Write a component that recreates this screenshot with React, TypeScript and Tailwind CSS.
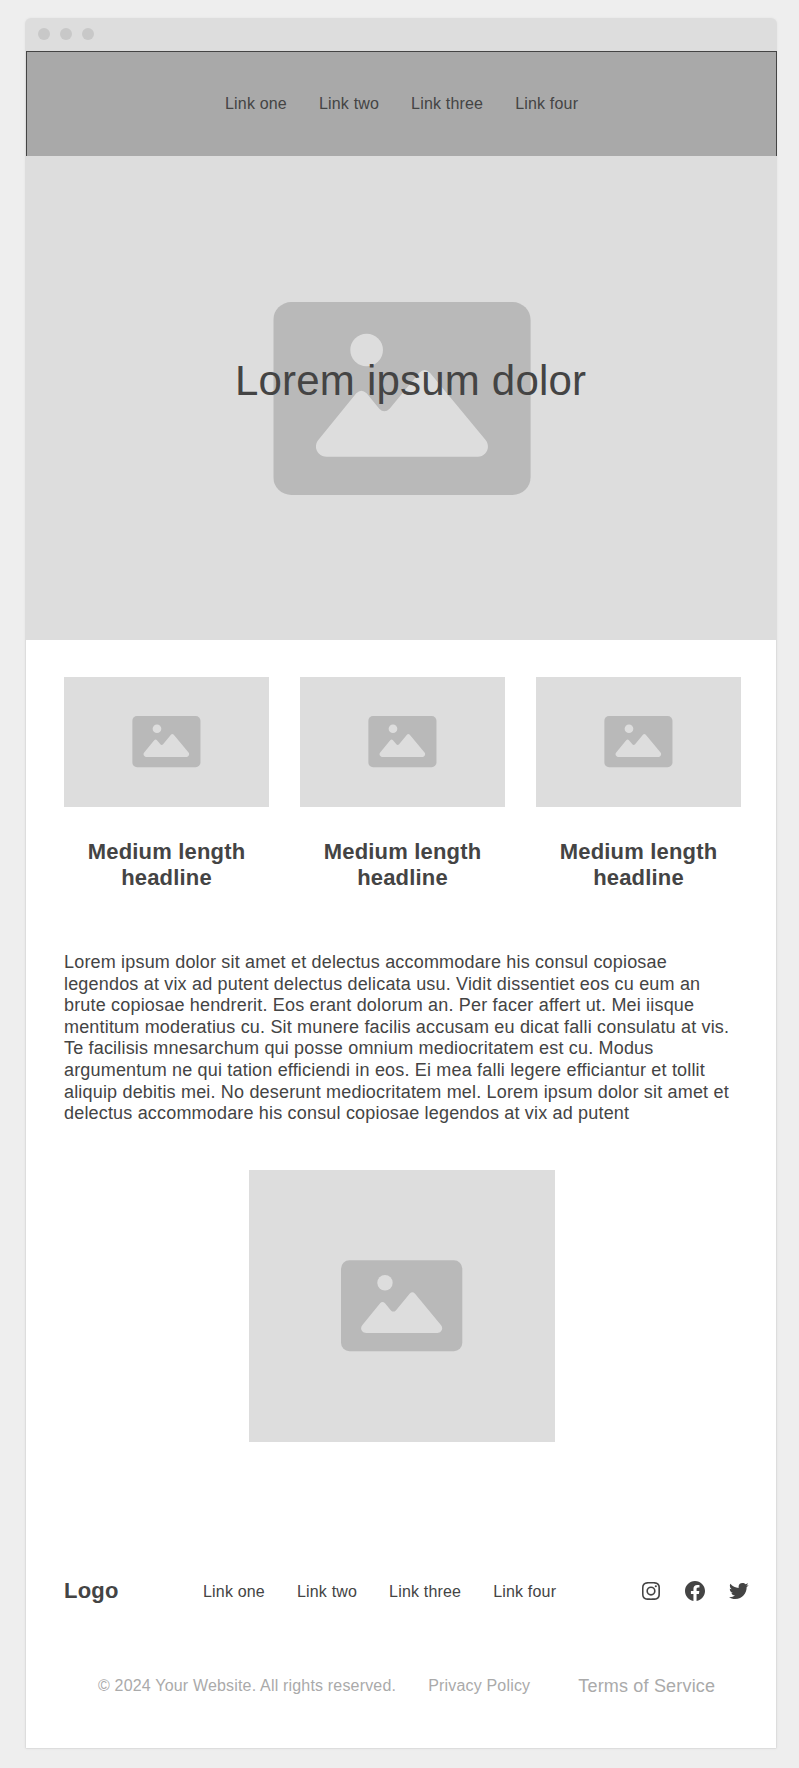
import { BiLogoFacebookCircle, BiLogoInstagram, BiLogoTwitter } from "react-icons/bi";

const links = ["Link one", "Link two", "Link three", "Link four"];
const features = ["Medium length headline", "Medium length headline", "Medium length headline"];

function ImageIcon({ className }: { className: string }) {
  return (
    <svg viewBox="0 0 772 579" className={className} aria-hidden="true">
      <rect width="772" height="579" rx="54" fill="#b9b9b9" />
      <circle cx="280" cy="144" r="49" fill="#dddddd" />
      <path
        fill="#dddddd"
        d="M160 464C142 464 128 450 128 434C128 427 130 420 135 414L249 274Q264 258 280 274L318 320Q333 335 349 320L438 212Q454 196 470 212L637 414C642 420 644 427 644 434C644 450 630 464 614 464Z"
      />
    </svg>
  );
}

function Links() {
  return (
    <nav className="flex gap-8 text-base tracking-[0.18px] whitespace-nowrap">
      {links.map((label) => (
        <a key={label} href="#">
          {label}
        </a>
      ))}
    </nav>
  );
}

export default function App() {
  return (
    <div className="h-[1768px] w-[799px] bg-[#eeeeee] pt-[18px] pl-[25px] font-['Liberation_Sans',Arial,sans-serif] text-[#444444]">
      <div className="flex h-[1731px] w-[752px] flex-col overflow-hidden rounded-t-md rounded-b-xs bg-[#dddddd] shadow-[0_0_3px_rgba(0,0,0,0.05)]">
        <div className="flex h-[33px] shrink-0 items-center gap-2.5 pb-px pl-[13px]">
          <span className="size-3 rounded-full bg-[#c8c8c8]" />
          <span className="size-3 rounded-full bg-[#c8c8c8]" />
          <span className="size-3 rounded-full bg-[#c8c8c8]" />
        </div>

        <header className="ml-px flex h-[105px] shrink-0 items-center border border-b-0 border-[#444444] bg-[#a9a9a9] pl-[198px]">
          <Links />
        </header>

        <section className="relative flex h-[484px] shrink-0 items-center justify-center pl-[2px]">
          <ImageIcon className="h-[193px] w-[257.3px] translate-x-[0.3px]" />
          <h1 className="absolute top-[200px] left-[210px] text-[42px] leading-[50px] tracking-[0.2px] whitespace-nowrap">
            Lorem ipsum dolor
          </h1>
        </section>

        <main className="mx-px mb-px flex grow flex-col bg-white pt-[37px] pr-[25px] pl-[38px]">
          <section className="flex gap-[31px]">
            {features.map((title, i) => (
              <article key={i} className="w-[205px]">
                <div className="flex h-[130px] items-center justify-center bg-[#dddddd]">
                  <ImageIcon className="h-[51.2px] w-[68.3px] translate-x-[0.2px]" />
                </div>
                <h2 className="mt-8 px-5 text-center text-[22px] leading-[26.4px] font-bold tracking-[0.18px]">
                  {title}
                </h2>
              </article>
            ))}
          </section>

          <p className="mt-[60.2px] w-[677px] text-[18px] leading-[21.6px] tracking-[0.18px]">
            Lorem ipsum dolor sit amet et delectus accommodare his consul copiosae legendos at vix ad putent delectus
            delicata usu. Vidit dissentiet eos cu eum an brute copiosae hendrerit. Eos erant dolorum an. Per facer
            affert ut. Mei iisque mentitum moderatius cu. Sit munere facilis accusam eu dicat falli consulatu at vis.
            Te facilisis mnesarchum qui posse omnium mediocritatem est cu. Modus argumentum ne qui tation efficiendi in
            eos. Ei mea falli legere efficiantur et tollit aliquip debitis mei. No deserunt mediocritatem mel. Lorem
            ipsum dolor sit amet et delectus accommodare his consul copiosae legendos at vix ad putent
          </p>

          <div className="mt-[45.2px] ml-[185px] flex h-[272px] w-[306px] shrink-0 items-center justify-center bg-[#dddddd]">
            <ImageIcon className="h-[91.3px] w-[121.3px]" />
          </div>

          <footer className="mt-[137px]">
            <div className="flex h-6 items-center">
              <div className="w-[139px] text-[22px] leading-6 font-bold tracking-[0.2px]">Logo</div>
              <div className="pt-0.5">
                <Links />
              </div>
              <div className="ml-auto flex gap-5">
                <BiLogoInstagram className="size-6" />
                <BiLogoFacebookCircle className="size-6" />
                <BiLogoTwitter className="size-6" />
              </div>
            </div>
            <div className="mt-[71px] flex h-6 items-center pl-[34px] tracking-[0.18px] whitespace-nowrap text-[#aaaaaa]">
              <span>© 2024 Your Website. All rights reserved.</span>
              <a href="#" className="ml-8">
                Privacy Policy
              </a>
              <a href="#" className="ml-12 pt-0.5 text-[18px]">
                Terms of Service
              </a>
            </div>
          </footer>
        </main>
      </div>
    </div>
  );
}
